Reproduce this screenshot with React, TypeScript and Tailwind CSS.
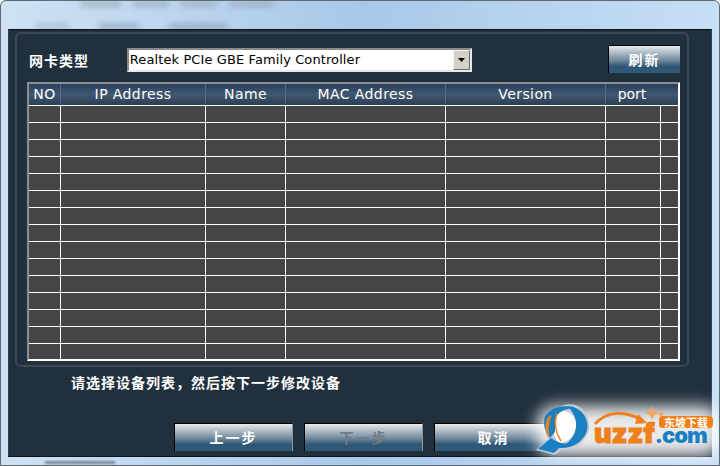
const columns = [
  { label: "NO", width: "w-[32px]" },
  { label: "IP Address", width: "w-[145px]" },
  { label: "Name", width: "w-[80px]" },
  { label: "MAC Address", width: "w-[160px]" },
  { label: "Version", width: "w-[160px]" },
]

const rowCount = 15

function GlassButton({ label, disabled, className }: { label: string; disabled?: boolean; className: string }) {
  return (
    <button
      className={`h-[28px] border-l border-t border-l-black border-t-black border-r border-r-[#8d979e] bg-gradient-to-b from-[#e8ebee] via-[#6d8699] via-55% to-[#2f5876] to-75% text-[14px] font-bold tracking-[2px] [font-family:'Noto_Sans_CJK_SC',sans-serif] ${
        disabled ? "text-[#6f7c85]" : "text-white"
      } ${className}`}
    >
      {label}
    </button>
  )
}

function Logo() {
  return (
    <div className="absolute left-[530px] top-[395px] h-[71px] w-[190px]">
      <div className="absolute left-[6px] top-[10px] h-[50px] w-[184px] rounded-[18px] bg-white opacity-90 blur-[8px]" />
      <svg className="absolute left-0 top-0" width="190" height="71" viewBox="0 0 190 71" fill="none">
        <path
          d="M5 54 L17 43 C11 31 15 15 33 9 C50 5 60 19 58 34 C54 47 43 54 31 54 L24 59 Z"
          fill="#c3ccd2"
        />
        <path d="M22 20 C30 12 42 14 45 26 C47 36 40 46 28 47 C22 40 20 30 22 20 Z" fill="#ffffff" />
        <path d="M14 20 C21 11 33 8 42 12 C33 13 27 16 24 23 L24 36 L19 42 C13 35 12 27 14 20 Z" fill="#1b7fc4" />
        <path d="M36 10 C50 10 59 23 56 35 C52 46 42 52 30 52 C38 47 44 40 45 31 C46 23 42 15 36 10 Z" fill="#1b7fc4" />
        <path d="M7 53 L20 42 L25 45 C30 48 35 48 41 46 C37 50 32 52 28 52 L23 57 Z" fill="#1b7fc4" />
        <path d="M17 21 C13 29 14 37 19 42 C17 35 17 28 21 19 Z" fill="#f08019" />
        <path d="M26 17 C23 26 24 36 30 45" stroke="#f08019" strokeWidth="1.5" />
        <path d="M64 28 C76 15 93 14 111 24" stroke="#f08019" strokeWidth="3" />
        <path d="M107 18 L116 27 L104 28 Z" fill="#f08019" />
        <path d="M121 10 L123 15 L128 17 L123 19 L121 24 L119 19 L114 17 L119 15 Z" fill="#f5a55a" />
        <path d="M130 14 L131 17 L134 18 L131 19 L130 22 L129 19 L126 18 L129 17 Z" fill="#f5a55a" />
      </svg>
      <div className="absolute left-[128px] top-[20px] flex h-[12px] w-[54px] items-center justify-center rounded-[4px] bg-[#f08019] text-[11px] leading-[12px] font-bold text-white [font-family:'Noto_Sans_CJK_SC',sans-serif]">
        东坡下载
      </div>
      <div className="absolute left-[63px] top-[32px] flex items-baseline text-[27px] font-black leading-[12px] [font-family:Inter,sans-serif]">
        <span className="text-[#f08019] [-webkit-text-stroke:1px_#f08019]">uzzf</span>
        <span className="text-[22px] tracking-[-1px] text-[#1b7fc4]">.com</span>
      </div>
    </div>
  )
}

export default function App() {
  return (
    <div className="relative flex h-[466px] w-[720px] flex-col overflow-hidden rounded-t-[6px] border border-[#5d6a73] bg-gradient-to-r from-[#cfe2f5] via-[#a9c8e8] to-[#c6dff6] px-[7px] pt-[28px] pb-[8px] [font-family:'DejaVu_Sans',sans-serif]">
      {/* blurred desktop behind the aero frame */}
      <div className="absolute left-[80px] top-[1px] flex gap-[12px] blur-[3px]">
        <div className="h-[4px] w-[40px] bg-[#93a3b3]" />
        <div className="h-[4px] w-[36px] bg-[#93a3b3]" />
        <div className="h-[4px] w-[36px] bg-[#93a3b3]" />
        <div className="h-[4px] w-[44px] bg-[#93a3b3]" />
      </div>
      <div className="absolute left-[34px] top-[23px] flex gap-[30px] blur-[3px]">
        <div className="h-[4px] w-[34px] bg-[#a3b4c5]" />
        <div className="h-[5px] w-[40px] bg-[#93a7bb]" />
        <div className="h-[5px] w-[58px] bg-[#93a7bb]" />
      </div>
      <div className="absolute bottom-[1px] left-[44px] h-[3px] w-[70px] bg-[#7c8894] blur-[1px]" />

      <div className="relative flex flex-1 flex-col border border-b-[#0c1218] border-l-[#33404b] border-r-[#33404b] border-t-[#0c1218] bg-[#21303d] pl-[6px] pr-[22px] pt-[2px]">
        <div className="flex h-[335px] flex-col rounded-[6px] border-2 border-[#3c4853] pl-[12px] pr-[7px] pt-[13px]">
          <div className="flex h-[35px] items-start">
            <span className="mt-[3px] w-[98px] text-[14px] font-bold leading-[20px] tracking-[1px] text-white [font-family:'Noto_Sans_CJK_SC',sans-serif]">
              网卡类型
            </span>
            <div className="mt-[1px] flex h-[24px] w-[346px] items-center justify-between border-2 border-b-[#e8e8e8] border-l-[#8a8a8a] border-r-[#e8e8e8] border-t-[#8a8a8a] bg-white pl-[1px] pr-0">
              <span className="text-[13px] font-medium leading-[20px] tracking-[0.1px] text-black [font-family:'DejaVu_Sans',sans-serif]">
                Realtek PCIe GBE Family Controller
              </span>
              <span className="flex h-[20px] w-[17px] items-center justify-center border border-b-[#6f6f6f] border-l-[#f5f5f5] border-r-[#6f6f6f] border-t-[#f5f5f5] bg-[#d4d0c8]">
                <svg width="7" height="4" viewBox="0 0 7 4">
                  <path d="M0 0 H7 L3.5 4 Z" fill="#000" />
                </svg>
              </span>
            </div>
            <GlassButton label="刷新" className="ml-[136px] -mt-[2px] w-[72px] !border-r-0" />
          </div>

          <div className="-ml-[2px] w-[653px] border-2 border-b-white border-l-[#8b8f92] border-r-white border-t-[#8b8f92] bg-[#454545]">
            <div className="flex h-[21px] bg-gradient-to-b from-[#2b4058] via-[#415871] to-[#2c3e54]">
              {columns.map((col) => (
                <div
                  key={col.label}
                  className={`${col.width} shrink-0 border-r border-[#4d6f92] text-center text-[14px] leading-[21px] font-medium tracking-[0.4px] text-white`}
                >
                  {col.label}
                </div>
              ))}
              <div className="flex-1 pr-[20px] text-center text-[14px] leading-[21px] font-medium text-white">port</div>
            </div>
            {Array.from({ length: rowCount }).map((_, i) => (
              <div key={i} className="flex h-[17px] border-t border-white last:h-[16px]">
                {columns.map((col) => (
                  <div key={col.label} className={`${col.width} shrink-0 border-r border-white`} />
                ))}
                <div className="w-[55px] shrink-0 border-r border-white" />
              </div>
            ))}
          </div>
        </div>

        <div className="mt-[5px] pl-[56px] text-[14px] font-bold leading-[20px] tracking-[1px] text-white [font-family:'Noto_Sans_CJK_SC',sans-serif]">
          请选择设备列表，然后按下一步修改设备
        </div>

        <div className="mt-[31px] flex gap-[11px] pl-[159px]">
          <GlassButton label="上一步" className="w-[119px]" />
          <GlassButton label="下一步" disabled className="w-[119px]" />
          <GlassButton label="取消" className="w-[119px]" />
        </div>
      </div>

      <Logo />
    </div>
  )
}
